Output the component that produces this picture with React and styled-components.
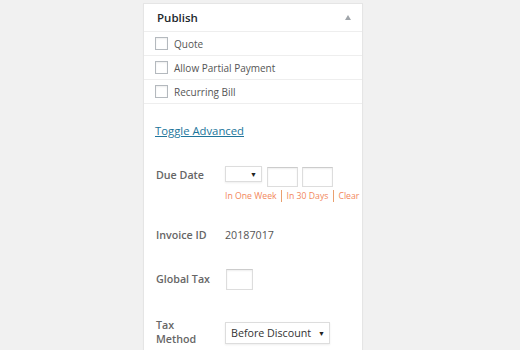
import React from "react";
import styled, { createGlobalStyle } from "styled-components";

const Global = createGlobalStyle`
  html, body { margin: 0; padding: 0; background: #f1f1f1; }
  body { font-family: "Open Sans", "Noto Sans", sans-serif; width: 520px; height: 350px; overflow: hidden; }
`;

const Page = styled.div`
  padding: 3px 0 0 143px;
`;

const Panel = styled.div`
  width: 218px;
  height: 360px;
  background: #fff;
  border: 1px solid #e5e5e5;
  box-shadow: 0 1px 1px rgba(0,0,0,0.04);
`;

const Header = styled.div`
  height: 27px;
  border-bottom: 1px solid #eee;
  display: flex;
  align-items: center;
  justify-content: space-between;
  padding: 0 11px 0 13px;
`;

const Title = styled.span`
  font-size: 11.5px;
  font-weight: 600;
  color: #23282d;
`;

const Arrow = styled.span`
  width: 0;
  height: 0;
  border-left: 3.5px solid transparent;
  border-right: 3.5px solid transparent;
  border-bottom: 5px solid #a0a5aa;
  margin-top: -1px;
`;

const CheckRow = styled.label`
  height: 23px;
  border-bottom: 1px solid #eee;
  display: flex;
  align-items: center;
  padding-left: 11px;
  gap: 6px;
  font-size: 10px;
  color: #555;
`;

const Box = styled.span`
  width: 11px;
  height: 11px;
  border: 1px solid #b4b9be;
  box-shadow: inset 0 1px 2px rgba(0,0,0,0.07);
  background: #fff;
`;

const Body = styled.div`
  padding: 19px 0 0 11px;
`;

const Toggle = styled.a`
  display: block;
  width: fit-content;
  font-size: 11.3px;
  line-height: 16px;
  color: #21759b;
  text-decoration: underline;
  font-weight: 400;
`;

const Field = styled.div`
  display: flex;
  align-items: flex-start;
  margin-top: ${p => p.$mt}px;
`;

const Label = styled.div`
  width: 70px;
  flex: none;
  font-size: 10.7px;
  line-height: ${p => p.$lh || 16}px;
  font-weight: 600;
  color: #666;
  padding-top: ${p => p.$pt || 0}px;
  padding-left: 1px;
  box-sizing: border-box;
`;

const Value = styled.div`
  font-size: 10.7px;
  line-height: 16px;
  color: #555;
`;

const Controls = styled.div`
  display: flex;
  flex-direction: column;
  gap: 3px;
  flex: none;
`;

const DateInputs = styled.div`
  display: flex;
  align-items: flex-start;
  gap: 4px;
`;

const Select = styled.div`
  width: ${p => p.$w}px;
  height: ${p => p.$h}px;
  box-sizing: border-box;
  border: 1px solid #ddd;
  box-shadow: 0 1px 2px rgba(0,0,0,0.07);
  background: #fff;
  display: flex;
  align-items: center;
  justify-content: space-between;
  padding: 0 4px 0 5px;
  font-size: 10.7px;
  color: #333;
  white-space: nowrap;
  flex: none;
  margin-top: ${p => p.$mt || 0}px;
`;

const Caret = styled.span`
  font-size: 7px;
  color: #222;
  margin-left: auto;
`;

const TextInput = styled.div`
  width: ${p => p.$w}px;
  height: ${p => p.$h}px;
  box-sizing: border-box;
  border: 1px solid #ddd;
  border-top-color: #ccc;
  box-shadow: inset 0 1px 2px rgba(0,0,0,0.07);
  background: #fff;
  flex: none;
  margin-left: ${p => p.$ml || 0}px;
  margin-top: ${p => p.$mt || 0}px;
`;

const Links = styled.div`
  display: flex;
  align-items: center;
  gap: 4.5px;
  font-size: 8.7px;
  line-height: 12px;
  color: #f2875b;
  white-space: nowrap;
`;

const Sep = styled.span`
  width: 1px;
  height: 12px;
  background: #e9a06e;
`;

export default function App() {
  return (
    <>
      <Global />
      <Page>
        <Panel>
          <Header>
            <Title>Publish</Title>
            <Arrow />
          </Header>
          <CheckRow><Box />Quote</CheckRow>
          <CheckRow><Box />Allow Partial Payment</CheckRow>
          <CheckRow><Box />Recurring Bill</CheckRow>
          <Body>
            <Toggle>Toggle Advanced</Toggle>
            <Field $mt={27}>
              <Label $pt={1}>Due Date</Label>
              <Controls>
                <DateInputs>
                  <Select $w={37} $h={16}><Caret>▼</Caret></Select>
                  <TextInput $w={31} $h={20} $ml={1} $mt={1} />
                  <TextInput $w={31} $h={20} $mt={1} />
                </DateInputs>
                <Links>
                  <span>In One Week</span><Sep />
                  <span>In 30 Days</span><Sep />
                  <span>Clear</span>
                </Links>
              </Controls>
            </Field>
            <Field $mt={25}>
              <Label>Invoice ID</Label>
              <Value>20187017</Value>
            </Field>
            <Field $mt={26}>
              <Label $pt={2}>Global Tax</Label>
              <TextInput $w={27} $h={21} $ml={1} />
            </Field>
            <Field $mt={28}>
              <Label $lh={14}>Tax<br />Method</Label>
              <Select $w={105} $h={22} $mt={4}>Before Discount<Caret>▼</Caret></Select>
            </Field>
          </Body>
        </Panel>
      </Page>
    </>
  );
}
